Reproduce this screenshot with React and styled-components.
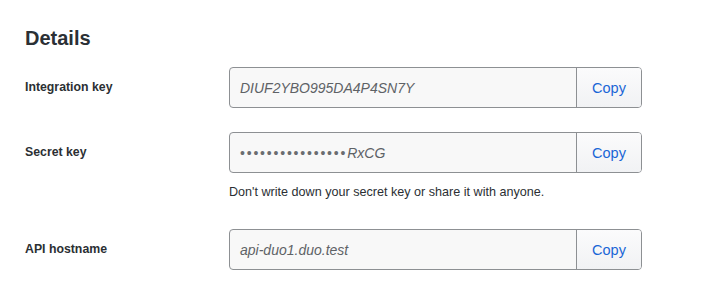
import React from "react";
import styled, { createGlobalStyle } from "styled-components";

const GlobalStyle = createGlobalStyle`
  body {
    margin: 0;
    background: #ffffff;
    font-family: "Liberation Sans", Arial, sans-serif;
    color: #2b2f33;
  }
`;

const fields = [
  { id: "ikey", label: "Integration key", value: "DIUF2YBO995DA4P4SN7Y" },
  {
    id: "skey",
    label: "Secret key",
    value: "RxCG",
    masked: 16,
    hint: "Don't write down your secret key or share it with anyone.",
  },
  { id: "host", label: "API hostname", value: "api-duo1.duo.test" },
];

export default function App() {
  return (
    <>
      <GlobalStyle />
      <DetailsSection>
        <Heading>Details</Heading>
        <FieldList>
          {fields.map((f) => (
            <FieldRow key={f.id}>
              <Label htmlFor={f.id}>{f.label}</Label>
              <FieldBody>
                <InputGroup>
                  <ValueBox id={f.id}>
                    {f.masked && <Dots>{"•".repeat(f.masked)}</Dots>}
                    {f.value}
                  </ValueBox>
                  <CopyButton type="button">Copy</CopyButton>
                </InputGroup>
                {f.hint && <Hint>{f.hint}</Hint>}
              </FieldBody>
            </FieldRow>
          ))}
        </FieldList>
      </DetailsSection>
    </>
  );
}

const DetailsSection = styled.section`
  padding: 26px 25px 0 25px;
`;

const Heading = styled.h2`
  margin: 0 0 17px 0;
  font-size: 20px;
  font-weight: 700;
  line-height: 24px;
  color: #2b3035;
`;

const FieldList = styled.div`
  display: flex;
  flex-direction: column;
  gap: 24px;
`;

const FieldRow = styled.div`
  display: grid;
  grid-template-columns: 204px 413px;
  align-items: start;
`;

const Label = styled.label`
  font-size: 12.3px;
  font-weight: 700;
  line-height: 41px;
  color: #2b2f33;
`;

const FieldBody = styled.div`
  display: flex;
  flex-direction: column;
`;

const InputGroup = styled.div`
  display: flex;
  height: 41px;
  box-sizing: border-box;
  border: 1px solid #8d9093;
  border-radius: 4px;
  overflow: hidden;
  background: #f8f8f8;
`;

const ValueBox = styled.div`
  flex: 1;
  display: flex;
  align-items: center;
  padding-left: 10px;
  font-size: 14px;
  font-style: italic;
  color: #5e6266;
`;

const Dots = styled.span`
  font-style: normal;
  font-size: 14px;
  letter-spacing: 1.8px;
  color: #6a6d70;
`;

const CopyButton = styled.button`
  width: 65px;
  border: none;
  border-left: 1px solid #8d9093;
  background: linear-gradient(#fbfbfc, #f1f2f4);
  font-family: "Liberation Sans", Arial, sans-serif;
  font-size: 14.5px;
  color: #1a66d6;
  cursor: pointer;
  padding: 0;
`;

const Hint = styled.p`
  margin: 11px 0 5px 0;
  font-size: 12.6px;
  line-height: 16px;
  color: #2b2f33;
`;
